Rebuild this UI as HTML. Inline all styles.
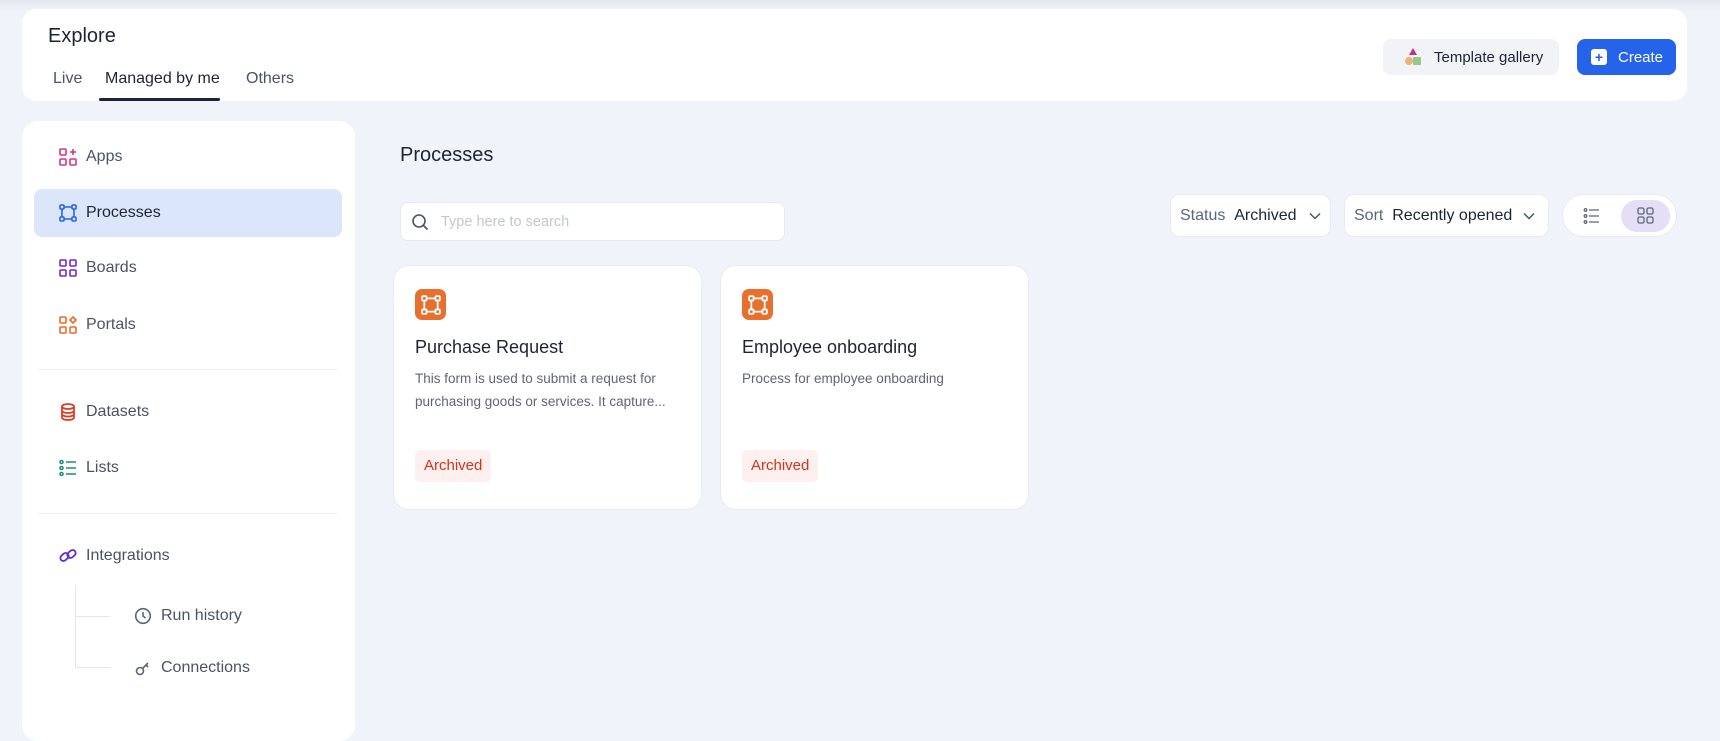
<!DOCTYPE html>
<html><head><meta charset="utf-8"><style>
*{box-sizing:border-box;margin:0;padding:0}
body{width:1720px;height:717px;overflow:hidden;background:#f0f3fa;font-family:"Liberation Sans",sans-serif;color:#1d2433;position:relative}
.abs{position:absolute}
.top{left:0;top:0;width:1720px;height:12px;background:linear-gradient(#e4e7ef,#f0f3fa)}
.hdr{left:22px;top:9px;width:1665px;height:92px;background:#fff;border-radius:14px}
.side{left:22px;top:121px;width:333px;height:620px;background:#fff;border-radius:16px}
.nav{position:absolute;left:0;display:flex;align-items:center;font-size:16px;color:#4a5366}
.nav svg{margin-right:9px}
.card{top:265px;width:309px;height:245px;background:#fff;border-radius:16px;border:1px solid #e8ebf2}
.ic{position:absolute;left:21px;top:23px;width:31px;height:31px;border-radius:7px;background:#e8702f;display:flex;align-items:center;justify-content:center}
.ct{position:absolute;left:21px;top:71px;font-size:18px;font-weight:500;color:#1d2433}
.cd{position:absolute;left:21px;top:101px;font-size:13.5px;line-height:23px;color:#5d6577;width:270px}
.bd{position:absolute;left:21px;top:184px;height:32px;padding:0 9px;border-radius:5px;background:#fdf0ee;color:#d2321e;font-size:15px;line-height:32px}
.dd{top:194px;height:43px;background:#fff;border-radius:10px;border:1px solid #e8ebf2;display:flex;align-items:center;padding-left:9px;font-size:16px}
</style></head><body>
<div class="abs top"></div>
<div class="abs hdr"></div>
<div class="abs" style="left:48px;top:25px;font-size:20px;font-weight:500">Explore</div>
<div class="abs" style="left:53px;top:70px;font-size:16px;color:#4a5366">Live</div>
<div class="abs" style="left:105px;top:70px;font-size:16px;color:#1d2433">Managed by me</div>
<div class="abs" style="left:246px;top:70px;font-size:16px;color:#4a5366">Others</div>
<div class="abs" style="left:99px;top:98px;width:121px;height:3px;background:#1d2433;border-radius:2px"></div>
<div class="abs" style="left:1383px;top:39px;width:176px;height:36px;background:#f2f3f6;border-radius:8px;display:flex;align-items:center;padding-left:21px;font-size:15px">
<svg width="20" height="20" viewBox="0 0 20 20" style="margin-right:10px"><polygon points="9,1 13,8 5,8" fill="#c8307a"/><circle cx="5" cy="14" r="4" fill="#f0b27a"/><rect x="9" y="10" width="8" height="8" rx="1" fill="#93c98a"/></svg>Template gallery</div>
<div class="abs" style="left:1577px;top:39px;width:99px;height:36px;background:#2563eb;border-radius:8px;display:flex;align-items:center;padding-left:14px;font-size:15px;color:#fff;font-weight:500">
<span style="width:16px;height:16px;background:#fff;border-radius:3px;color:#2563eb;font-size:14px;line-height:16px;text-align:center;margin-right:11px;font-weight:700">+</span>Create</div>

<div class="abs side">
<div class="abs" style="left:12px;top:68px;width:308px;height:48px;background:#dce6fb;border-radius:8px"></div>
<div class="nav" style="top:26px;left:37px;height:20px"><svg width="18" height="18" viewBox="0 0 18 18" fill="none" stroke="#d63384" stroke-width="1.6"><rect x="1" y="1" width="6" height="6" rx="1"/><rect x="1" y="11" width="6" height="6" rx="1"/><rect x="11" y="11" width="6" height="6" rx="1"/><path d="M14 1v6M11 4h6"/></svg>Apps</div>
<div class="nav" style="top:82px;left:37px;height:20px;color:#1d2433"><svg width="18" height="18" viewBox="0 0 18 18" fill="none" stroke="#2563eb" stroke-width="1.6"><rect x="1" y="1" width="4" height="4" rx="1"/><rect x="13" y="1" width="4" height="4" rx="1"/><rect x="1" y="13" width="4" height="4" rx="1"/><rect x="13" y="13" width="4" height="4" rx="1"/><path d="M5 3h8M5 15h8M3 5v8M15 5v8"/></svg>Processes</div>
<div class="nav" style="top:137px;left:37px;height:20px"><svg width="18" height="18" viewBox="0 0 18 18" fill="none" stroke="#6d28d9" stroke-width="1.6"><rect x="1" y="1" width="6" height="6" rx="1"/><rect x="11" y="1" width="6" height="6" rx="1"/><rect x="1" y="11" width="6" height="6" rx="1"/><rect x="11" y="11" width="6" height="6" rx="1"/></svg>Boards</div>
<div class="nav" style="top:194px;left:37px;height:20px"><svg width="18" height="18" viewBox="0 0 18 18" fill="none" stroke="#ea6a2a" stroke-width="1.6"><rect x="1" y="1" width="6" height="6" rx="1"/><rect x="1" y="11" width="6" height="6" rx="1"/><rect x="11" y="11" width="6" height="6" rx="1"/><path d="M14 1l3 3-3 3-3-3z"/></svg>Portals</div>
<div class="abs" style="left:16px;top:248px;width:299px;height:1px;background:#eef0f4"></div>
<div class="nav" style="top:281px;left:37px;height:20px"><svg width="18" height="18" viewBox="0 0 18 18" fill="none" stroke="#dc3b26" stroke-width="1.8"><ellipse cx="9" cy="3.5" rx="6" ry="2.5"/><path d="M3 3.5v11c0 1.4 2.7 2.5 6 2.5s6-1.1 6-2.5v-11M3 7.5c0 1.4 2.7 2.5 6 2.5s6-1.1 6-2.5M3 11c0 1.4 2.7 2.5 6 2.5s6-1.1 6-2.5"/></svg>Datasets</div>
<div class="nav" style="top:337px;left:37px;height:20px"><svg width="18" height="18" viewBox="0 0 18 18" fill="none" stroke="#1e8a80" stroke-width="1.6"><circle cx="2.5" cy="3" r="1.5"/><circle cx="2.5" cy="9" r="1.5"/><circle cx="2.5" cy="15" r="1.5"/><path d="M7 3h10M7 9h10M7 15h10"/></svg>Lists</div>
<div class="abs" style="left:16px;top:392px;width:299px;height:1px;background:#eef0f4"></div>
<div class="nav" style="top:425px;left:37px;height:20px"><svg width="18" height="18" viewBox="0 0 18 18" fill="none" stroke="#5b2de0" stroke-width="1.8"><rect x="1" y="7" width="9" height="6" rx="3" transform="rotate(-40 5.5 10)"/><rect x="8" y="4" width="9" height="6" rx="3" transform="rotate(-40 12.5 7)"/></svg>Integrations</div>
<div class="abs" style="left:53px;top:464px;width:1px;height:82px;background:#e4e7ee"></div>
<div class="abs" style="left:53px;top:495px;width:35px;height:1px;background:#e4e7ee"></div>
<div class="abs" style="left:53px;top:546px;width:35px;height:1px;background:#e4e7ee"></div>
<div class="nav" style="top:485px;left:112px;height:20px"><svg width="18" height="18" viewBox="0 0 18 18" fill="none" stroke="#5d6577" stroke-width="1.6"><circle cx="9" cy="9" r="7.3"/><path d="M9 5v4l2.5 2"/></svg>Run history</div>
<div class="nav" style="top:537px;left:112px;height:20px"><svg width="18" height="18" viewBox="0 0 18 18" fill="none" stroke="#5d6577" stroke-width="1.6"><circle cx="6" cy="12" r="3.5"/><path d="M8.5 9.5L14 4M12 6l2 2"/></svg>Connections</div>
</div>

<div class="abs" style="left:400px;top:144px;font-size:20px;font-weight:500">Processes</div>
<div class="abs" style="left:400px;top:202px;width:385px;height:39px;background:#fff;border:1px solid #e6e9f0;border-radius:8px;display:flex;align-items:center;padding-left:10px;font-size:14.5px;color:#c2c7d2">
<svg width="18" height="18" viewBox="0 0 18 18" fill="none" stroke="#4a5366" stroke-width="1.6" style="margin-right:12px"><circle cx="8" cy="8" r="6"/><path d="M12.5 12.5l4 4"/></svg>Type here to search</div>

<div class="abs dd" style="left:1170px;width:161px"><span style="color:#5d6577">Status</span>&nbsp;&nbsp;<span style="font-weight:500">Archived</span><svg width="12" height="8" viewBox="0 0 12 8" style="margin-left:12px" fill="none" stroke="#4a5366" stroke-width="1.5"><path d="M1 1.5l5 5 5-5"/></svg></div>
<div class="abs dd" style="left:1344px;width:205px"><span style="color:#5d6577">Sort</span>&nbsp;&nbsp;<span style="font-weight:500">Recently opened</span><svg width="12" height="8" viewBox="0 0 12 8" style="margin-left:11px" fill="none" stroke="#4a5366" stroke-width="1.5"><path d="M1 1.5l5 5 5-5"/></svg></div>
<div class="abs" style="left:1562px;top:194px;width:115px;height:43px;background:#fff;border:1px solid #e8ebf2;border-radius:22px">
<svg class="abs" style="left:20px;top:12px" width="18" height="18" viewBox="0 0 18 18" fill="none" stroke="#5d6577" stroke-width="1.3"><circle cx="2.5" cy="3" r="1.3"/><circle cx="2.5" cy="9" r="1.3"/><circle cx="2.5" cy="15" r="1.3"/><path d="M6 3h10M6 9h10M6 15h10"/></svg>
<div class="abs" style="left:58px;top:5px;width:49px;height:32px;background:#e5def7;border-radius:16px"></div>
<svg class="abs" style="left:74px;top:12px" width="17" height="17" viewBox="0 0 17 17" fill="none" stroke="#5d6577" stroke-width="1.3"><rect x="1" y="1" width="6" height="6" rx="1.5"/><rect x="10" y="1" width="6" height="6" rx="1.5"/><rect x="1" y="10" width="6" height="6" rx="1.5"/><rect x="10" y="10" width="6" height="6" rx="1.5"/></svg>
</div>

<div class="abs card" style="left:393px">
<div class="ic"><svg width="20" height="20" viewBox="0 0 18 18" fill="none" stroke="#fff" stroke-width="1.6"><rect x="1" y="1" width="4" height="4" rx="1"/><rect x="13" y="1" width="4" height="4" rx="1"/><rect x="1" y="13" width="4" height="4" rx="1"/><rect x="13" y="13" width="4" height="4" rx="1"/><path d="M5 3h8M5 15h8M3 5v8M15 5v8"/></svg></div>
<div class="ct">Purchase Request</div>
<div class="cd">This form is used to submit a request for purchasing goods or services. It capture...</div>
<div class="bd">Archived</div></div>
<div class="abs card" style="left:720px">
<div class="ic"><svg width="20" height="20" viewBox="0 0 18 18" fill="none" stroke="#fff" stroke-width="1.6"><rect x="1" y="1" width="4" height="4" rx="1"/><rect x="13" y="1" width="4" height="4" rx="1"/><rect x="1" y="13" width="4" height="4" rx="1"/><rect x="13" y="13" width="4" height="4" rx="1"/><path d="M5 3h8M5 15h8M3 5v8M15 5v8"/></svg></div>
<div class="ct">Employee onboarding</div>
<div class="cd">Process for employee onboarding</div>
<div class="bd">Archived</div></div>
</body></html>
